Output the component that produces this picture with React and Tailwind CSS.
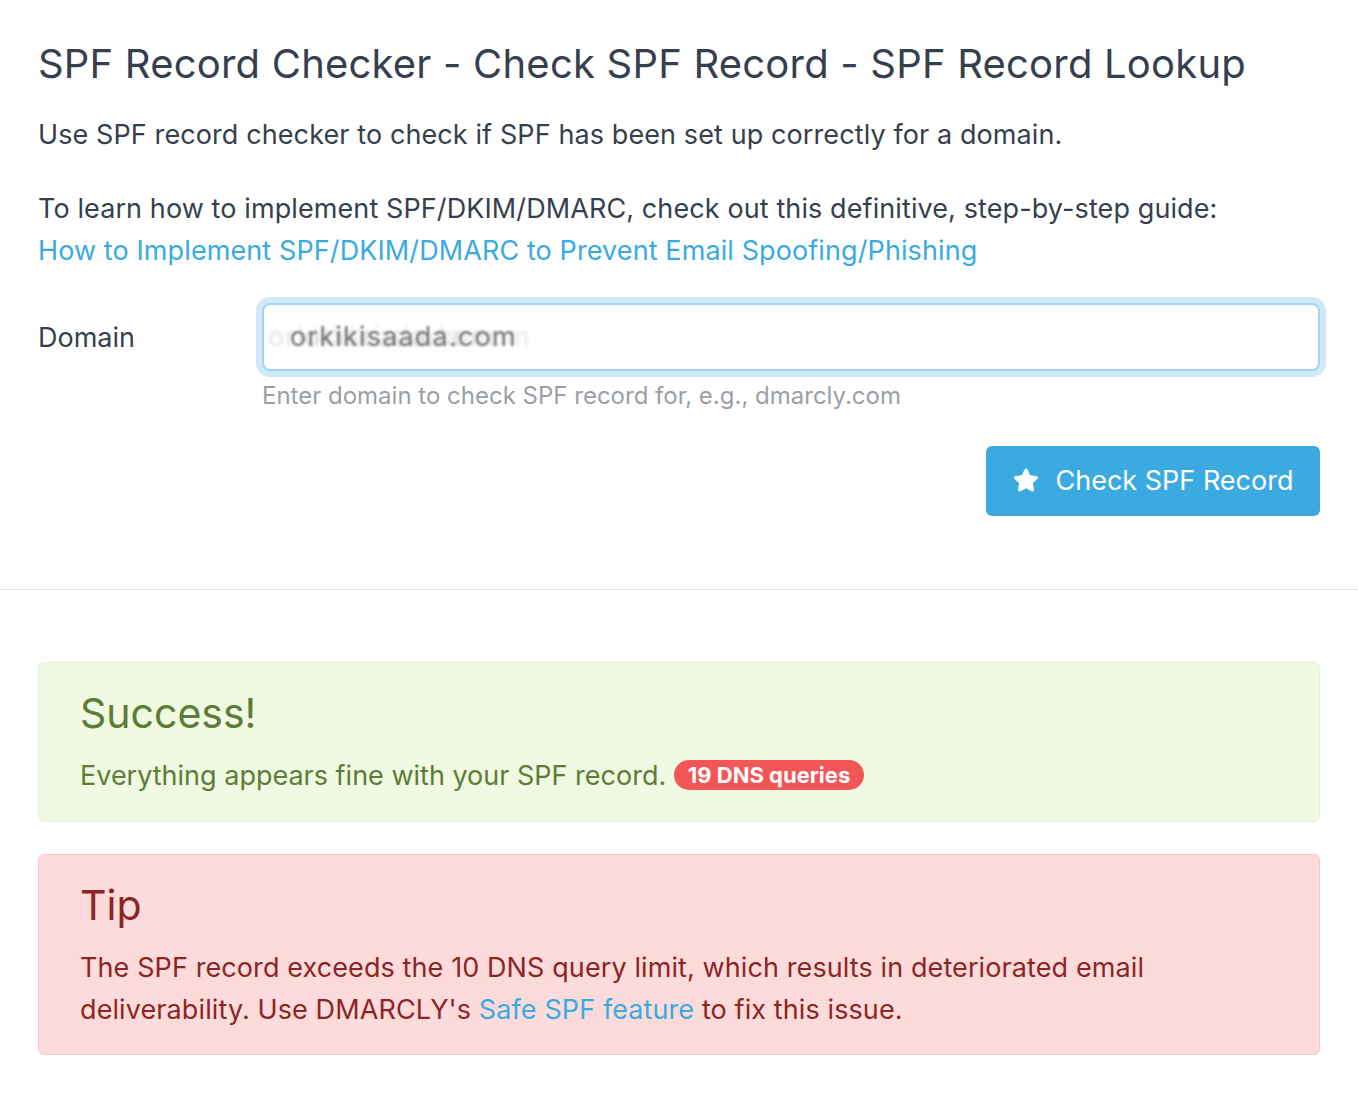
import React from 'react';
import { FaStar } from 'react-icons/fa';

const App = () => {
    return (
        <div className="min-h-screen bg-white text-[#363f4e] font-['Inter',sans-serif]">
            {/* Header + form */}
            <section className="px-[38px] pt-[40px]">
                <h1 className="text-[40px] leading-[48px] font-normal tracking-[0.2px]">
                    SPF Record Checker - Check SPF Record - SPF Record Lookup
                </h1>
                <p className="mt-[26px] text-[27px] leading-[42px] tracking-[0.1px]">
                    Use SPF record checker to check if SPF has been set up correctly for a domain.
                </p>
                <p className="mt-[32px] text-[27px] leading-[42px] tracking-[0.1px]">
                    To learn how to implement SPF/DKIM/DMARC, check out this definitive, step-by-step guide:
                    <br />
                    <a href="#" className="text-[#3aaae1]">
                        How to Implement SPF/DKIM/DMARC to Prevent Email Spoofing/Phishing
                    </a>
                </p>

                <div className="mt-[31px] flex items-start">
                    <label className="w-[224px] shrink-0 text-[27px] leading-[70px]">Domain</label>
                    <div className="flex-1">
                        <div className="h-[68px] rounded-lg border-2 border-[#a3d5f0] ring-[6px] ring-[#cfe9f7] bg-white flex items-center pl-[26px] overflow-hidden">
                            <span className="text-[27px] tracking-[1.2px] text-[#707070] blur-[0.8px] [text-shadow:-22px_0_3px_rgba(0,0,0,0.12),14px_0_3px_rgba(0,0,0,0.1)]">
                                orkikisaada.com
                            </span>
                        </div>
                        <p className="mt-[12px] text-[24px] leading-[26px] text-[#9a9fa6]">
                            Enter domain to check SPF record for, e.g., dmarcly.com
                        </p>
                    </div>
                </div>

                <div className="mt-[37px] flex justify-end">
                    <button className="h-[70px] w-[334px] rounded-md bg-[#3aaae1] text-white text-[27px] flex items-center justify-center gap-[17px]">
                        <FaStar className="w-[26px] h-[26px] -mt-[2px]" />
                        Check SPF Record
                    </button>
                </div>
            </section>

            <hr className="mt-[73px] border-t border-[#e4e4e4]" />

            {/* Results */}
            <section className="px-[38px] pt-[72px] pb-[40px] space-y-[32px]">
                <div className="rounded-md border border-[#e6f3d3] bg-[#f0f9e2] px-[41px] pt-[26px] pb-[24px]">
                    <h2 className="text-[41px] leading-[48px] text-[#5e7c36]">Success!</h2>
                    <p className="mt-[18px] text-[27px] leading-[42px] text-[#5e7c36]">
                        Everything appears fine with your SPF record.{' '}
                        <span className="inline-block align-[2px] rounded-full bg-[#f35656] px-[14px] text-[22px] leading-[30px] font-bold text-white">
                            19 DNS queries
                        </span>
                    </p>
                </div>

                <div className="rounded-md border border-[#fac6c6] bg-[#fddbdb] px-[41px] pt-[26px] pb-[23px]">
                    <h2 className="text-[41px] leading-[48px] text-[#8b2526]">Tip</h2>
                    <p className="mt-[18px] text-[27px] leading-[42px] tracking-[0.1px] text-[#8b2526]">
                        The SPF record exceeds the 10 DNS query limit, which results in deteriorated email
                        <br />
                        deliverability. Use DMARCLY's{' '}
                        <a href="#" className="text-[#3aaae1]">Safe SPF feature</a> to fix this issue.
                    </p>
                </div>
            </section>
        </div>
    );
};

export default App;
